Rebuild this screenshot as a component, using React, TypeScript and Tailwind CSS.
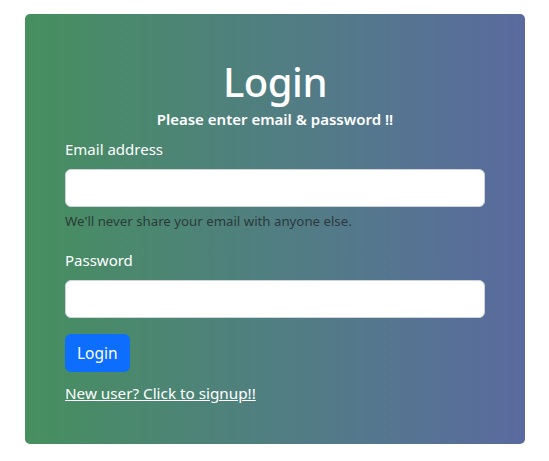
export default function App() {
  return (
    <div className="min-h-screen bg-white px-[25px] pt-[14px] font-['Noto_Sans',sans-serif] text-white">
      <div className="w-[500px] rounded-[5px] bg-gradient-to-r from-[#468f5e] to-[#5a6a9f] px-10 pb-[39px] pt-[43px]">
        <h1 className="text-center text-[40px] font-medium leading-[50px] tracking-[-0.5px]">Login</h1>
        <p className="text-center text-[15px] font-semibold leading-6">Please enter email &amp; password !!</p>
        <form className="mt-1.5" onSubmit={(e) => e.preventDefault()}>
          <div className="mb-4">
            <label className="mb-2 block text-[15px] leading-6">Email address</label>
            <input type="email" className="block h-[38px] w-full rounded-md border border-[#ced4da] bg-white px-3 text-[#212529] outline-none" />
            <div className="mt-1 text-[13.25px] leading-[21px] text-[#212529]/80">We'll never share your email with anyone else.</div>
          </div>
          <div className="mb-4">
            <label className="mb-2 block text-[15px] leading-6">Password</label>
            <input type="password" className="block h-[38px] w-full rounded-md border border-[#ced4da] bg-white px-3 text-[#212529] outline-none" />
          </div>
          <button type="submit" className="h-[38px] rounded-md bg-[#0d6efd] px-3 text-[15.5px] leading-6 text-white">Login</button>
          <div className="mt-[9px]">
            <a href="#" className="text-[15.25px] leading-6 underline">New user? Click to signup!!</a>
          </div>
        </form>
      </div>
    </div>
  )
}
